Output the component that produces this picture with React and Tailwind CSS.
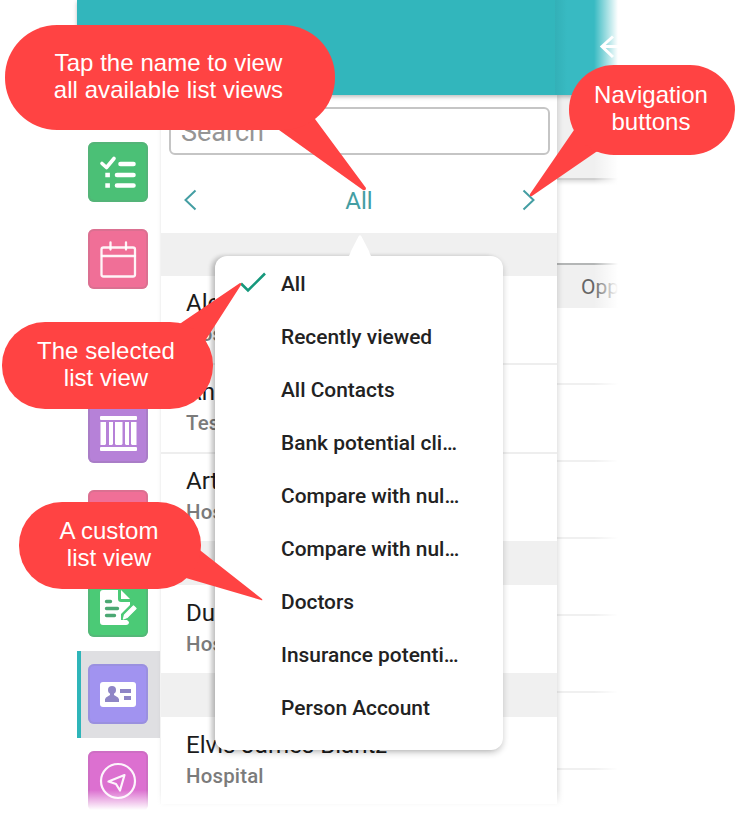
import React from "react";

const CheckList = () => (
  <svg viewBox="0 0 60 60" className="size-full" fill="none" stroke="#fff">
    <path d="M14 21.500l4.500 4 7.500-9" strokeWidth="3.600" strokeLinecap="round" strokeLinejoin="round" />
    <path d="M32.500 22h13M29 33h16.500M29 43.500h16.500" strokeWidth="4.600" strokeLinecap="round" />
    <path d="M17.300 33h4.600M17.300 43.500h4.600" strokeWidth="4.600" />
  </svg>
);

const Calendar = () => (
  <svg viewBox="0 0 60 60" className="size-full" fill="none" stroke="#fff" strokeOpacity=".92" strokeWidth="2.300" strokeLinecap="round">
    <rect x="13.500" y="18.500" width="33.500" height="29" rx="2" />
    <path d="M14 27h33M22.500 13.500v7M38 13.500v7" />
  </svg>
);

const Columns = () => (
  <svg viewBox="0 0 60 60" className="size-full" fill="#fff">
    <rect x="12" y="13" width="37" height="4" rx="1" />
    <rect x="12" y="44" width="37" height="4" rx="1" />
    <path d="M12.500 19h5.500v22l-1 1h-4.500zM21 19h4v22l-1 1h-3zM27 19h7.500v22l-1 1h-5.500l-1-1zM37 19h4v23h-3l-1-1zM43 19h5.500v23H44l-1-1z" />
  </svg>
);

const Form = () => (
  <svg viewBox="0 0 60 60" className="size-full">
    <path d="M15 13h15v9a3 3 0 0 0 3 3h9v3L33 37v6h6l2 2a3 3 0 0 1-3 3H15a3 3 0 0 1-3-3V16a3 3 0 0 1 3-3z" fill="#fff" />
    <path d="M33 13l9 9h-9z" fill="#fff" />
    <path d="M18.500 24.500h4M18.500 31.500h11M18.500 38.500h8" stroke="#4ba873" strokeWidth="3.400" strokeLinecap="round" />
    <path d="M35.500 42l1-4 9-9 2.500 2.500-9 9z" fill="#fff" stroke="#fff" strokeWidth="1.300" strokeLinejoin="round" />
  </svg>
);

const ContactCard = () => (
  <svg viewBox="0 0 60 60" className="size-full">
    <rect x="12" y="18" width="36" height="25" rx="3" fill="#fff" />
    <circle cx="24" cy="26" r="4" fill="#8f86c6" />
    <path d="M22 28h4v3l4 2.500q1.500 1 1 4.500H17q-.5-3.500 1-4.500l4-2.500z" fill="#8f86c6" />
    <path d="M32 25h11v4H32zM36 32h7v4h-7z" fill="#8f86c6" />
  </svg>
);

const Compass = () => (
  <svg viewBox="0 0 60 60" className="size-full" fill="none" stroke="#fff" strokeOpacity=".93" strokeWidth="2.200" strokeLinejoin="round">
    <circle cx="30" cy="30" r="17" />
    <path d="M36.500 24L20.500 30.500l7.500 2.500 4 6.500z" />
  </svg>
);

const apps = [
  { color: "bg-[#4bc076]", ring: "border-[#5aac79]", Icon: CheckList },
  { color: "bg-[#f06f97]", ring: "border-[#cd718e]", Icon: Calendar },
  { color: "bg-transparent", ring: "border-transparent" },
  { color: "bg-[#b681d8]", ring: "border-[#a07bbd]", Icon: Columns },
  { color: "bg-[#f06f97]", ring: "border-[#cd718e]" },
  { color: "bg-[#4bca76]", ring: "border-[#5aac79]", Icon: Form },
  { color: "bg-[#a193f0]", ring: "border-[#968dd3]", Icon: ContactCard, active: true },
  { color: "bg-[#dc70d0]", ring: "border-[#c56dbc]", Icon: Compass },
];

const views = [
  "All",
  "Recently viewed",
  "All Contacts",
  "Bank potential cli…",
  "Compare with nul…",
  "Compare with nul…",
  "Doctors",
  "Insurance potenti…",
  "Person Account",
];

function Sidebar() {
  return (
    <nav className="w-[83px] shrink-0 pt-[34px]">
      {apps.map(({ color, ring, Icon, active }, i) => (
        <div
          key={i}
          className={
            active
              ? "h-[87px] border-l-4 border-[#2eb5b9] bg-[#dfdfe2] pt-[13px] pl-[7px]"
              : "h-[87px] border-l-4 border-transparent pt-[13px] pl-[7px]"
          }
        >
          <div className={`relative size-[60px] rounded-[6px] ${color}`}>
            <div className={`absolute inset-0 rounded-[6px] border-2 opacity-60 ${ring}`} />
            {Icon && <Icon />}
          </div>
        </div>
      ))}
    </nav>
  );
}

function Row({ name, sub, last }) {
  return (
    <div
      className={
        last
          ? "h-[88px] pt-[10px] pl-[25px]"
          : "h-[89px] border-b-2 border-[#eeeeee] pt-[10px] pl-[25px]"
      }
    >
      <div className="h-[34px] whitespace-nowrap text-[24.1px] leading-[34px] text-[#1b1b1b]">{name}</div>
      <div className="text-[20.4px] leading-[28px] font-medium tracking-[0.2px] text-[#7b7b7b]">{sub}</div>
    </div>
  );
}

function ContactList() {
  return (
    <main className="z-10 h-[709px] w-[397px] shrink-0 border-l border-[#f3f3f3] bg-white shadow-[2px_0_5px_rgba(0,0,0,0.12)]">
      <div className="pt-3 pr-[7px] pl-2">
        <div className="h-12 rounded-[6px] border-2 border-[#c5c5c5] pl-[10px] text-[27px] leading-[46px] text-[#959595]">Search</div>
      </div>
      <div className="flex h-[78px] items-center justify-between px-[22px] pt-[12px]">
        <svg viewBox="0 0 14 22" className="h-[22px] w-[14px]" fill="none" stroke="#449ea3" strokeWidth="2"><path d="M12.500 1.500L2.500 11l10 9.500" /></svg>
        <span className="pt-px text-[24px] leading-7 text-[#449ea3]">All</span>
        <svg viewBox="0 0 14 22" className="h-[22px] w-[14px]" fill="none" stroke="#449ea3" strokeWidth="2"><path d="M2.500 1.500L12.500 11l-10 9.500" /></svg>
      </div>
      <div className="h-[43px] bg-[#f0f0f0]" />
      <Row name="Alec" sub="Hospital" />
      <Row name="Anna" sub="Test" />
      <Row name="Arthur" sub="Hospital" last />
      <div className="-mt-px mb-px h-11 bg-[#f0f0f0]" />
      <Row name="Duncan" sub="Hospital" last />
      <div className="-mt-px mb-px h-11 bg-[#f0f0f0]" />
      <Row name="Elvis James Blantz" sub="Hospital" last />
    </main>
  );
}

function DetailPane() {
  return (
    <section className="w-[62px] shrink-0">
      <div className="h-[85px] border-b-2 border-[#cfcfcf] bg-[#f0f0f0] shadow-[0_2px_4px_rgba(0,0,0,0.15)]" />
      <div className="h-[83px]" />
      <div className="h-[45px] border-t-2 border-[#b4b6b6] bg-[#f0f0f0] pl-6 text-[21px] leading-[44px] whitespace-nowrap text-[#666]">Opp</div>
      <div className="h-[77px] border-b-2 border-[#f0f0f0]" />
      <div className="h-[77px] border-b-2 border-[#f0f0f0]" />
      <div className="h-[77px] border-b-2 border-[#f0f0f0]" />
      <div className="h-[77px] border-b-2 border-[#f0f0f0]" />
      <div className="h-[77px] border-b-2 border-[#f0f0f0]" />
      <div className="h-[77px] border-b-2 border-[#f0f0f0]" />
    </section>
  );
}

function ViewMenu() {
  return (
    <div className="absolute top-[256px] left-[215px] z-20 h-[494px] w-[288px] rounded-[12px] bg-white pt-[1px] shadow-[-4px_0_4px_rgba(0,0,0,0.16),0_3px_6px_rgba(0,0,0,0.2)]">
      <svg viewBox="0 0 24 23" className="absolute -top-[22px] left-[133px] h-[23px] w-6"><path d="M0 23Q2 21 3 17L10.500 2.500Q12 0 13.500 2.500L21 17Q22 21 24 23z" fill="#fff" /></svg>
      {views.map((v, i) => (
        <div key={i} className="flex h-[53px] items-center">
          <div className="w-[66px] pl-6">
            {i === 0 && (
              <svg viewBox="0 0 28 22" className="-mt-px h-[22px] w-7" fill="none" stroke="#16987c" strokeWidth="2.600"><path d="M2 11.500L9 18.500 26 1.500" /></svg>
            )}
          </div>
          <span className="whitespace-nowrap text-[20.9px] leading-6 font-medium text-[#222]">{v}</span>
        </div>
      ))}
    </div>
  );
}

function Callout({ className, lines }) {
  return (
    <div className={`absolute z-40 flex flex-col items-center justify-center bg-[#ff4343] font-['Liberation_Sans',Arial,sans-serif] text-[24px] leading-[27px] tracking-[0.05px] whitespace-nowrap text-white ${className}`}>
      {lines.map((l) => (
        <span key={l}>{l}</span>
      ))}
    </div>
  );
}

export default function App() {
  return (
    <div className="relative h-[822px] w-[737px] overflow-hidden bg-white font-[Roboto,sans-serif]">
      <div className="ml-[77px] w-[542px]">
        <header className="relative z-20 flex h-[95px] bg-[#32b6bc] shadow-[0_2px_4px_rgba(0,0,0,0.25)]">
          <div className="w-[480px]" />
          <div className="flex-1 bg-[linear-gradient(to_right,#33b0b7,#38bac2_12px)] pt-[35px] pl-[42px]">
            <svg viewBox="0 0 20 24" className="ml-[2px] h-6 w-5" fill="none" stroke="#fff" strokeWidth="3"><path d="M14 1.500L3 11.500l11 10.500M3 11.500h17" /></svg>
          </div>
        </header>
        <div className="flex h-[727px]">
          <Sidebar />
          <ContactList />
          <DetailPane />
        </div>
      </div>
      <ViewMenu />
      <div className="absolute top-0 left-[594px] z-30 h-full w-[143px] bg-[linear-gradient(to_right,transparent,white_24px)]" />
      <div className="absolute top-[790px] left-0 z-30 h-8 w-full bg-[linear-gradient(to_bottom,transparent,white_20px)]" />
      <Callout className="top-[25px] left-[5px] h-[105px] w-[330px] rounded-[52px] pr-[3px] pb-[3px]" lines={["Tap the name to view", "all available list views"]} />
      <Callout className="top-[65px] left-[569px] h-[90px] w-[166px] rounded-[45px] pb-[4px] pr-[2px]" lines={["Navigation", "buttons"]} />
      <Callout className="top-[322px] left-[2px] h-[87px] w-[211px] rounded-[43px] pb-[3px] pr-[3px]" lines={["The selected", "list view"]} />
      <Callout className="top-[502px] left-[19px] h-[87px] w-[182px] rounded-[43px] pb-[3px] pr-[2px]" lines={["A custom", "list view"]} />
      <svg viewBox="0 0 737 822" className="pointer-events-none absolute inset-0 z-30 h-full w-full" fill="#ff4343">
        <path d="M270 125L279 130 363 190Q366 191 366 188L315 119 300 100z" />
        <path d="M585 115L574 130 530 194Q529 197 532 196L596 152 615 145z" />
        <path d="M165 330L181 323 240 283Q242 283 241 285L205 341 185 360z" />
        <path d="M190 543L201 551 262 599Q263 601 261 600L186 578 170 570z" />
      </svg>
    </div>
  );
}
